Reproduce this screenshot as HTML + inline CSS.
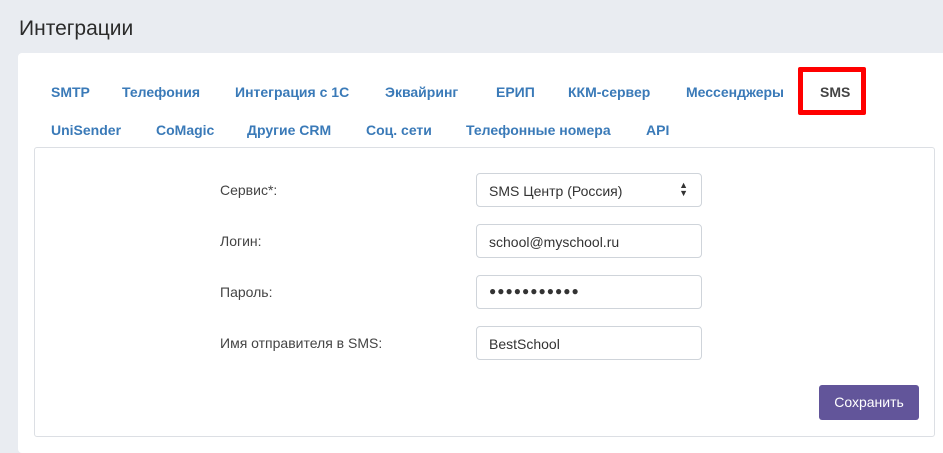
<!DOCTYPE html>
<html><head><meta charset="utf-8"><style>
*{box-sizing:border-box;margin:0;padding:0}
body{width:943px;height:441px;background:#e9ecf1;font-family:"Liberation Sans","DejaVu Sans",sans-serif;position:relative;overflow:hidden}
.h{position:absolute;left:19px;top:17px;font-size:21px;color:#2b2b2b}
.card{position:absolute;left:18px;top:53px;width:940px;height:400px;background:#fff;border-radius:4px}
.t{position:absolute;font-size:14px;font-weight:bold;color:#3a7ab8;white-space:nowrap}
.red{position:absolute;left:798px;top:67px;width:68px;height:48px;border:5px solid #f00;border-radius:2px}
.panel{position:absolute;left:34px;top:147px;width:901px;height:290px;border:1px solid #dcdfe4;border-radius:3px;background:#fff}
.l{position:absolute;left:220px;font-size:14px;color:#444}
.in{position:absolute;left:476px;width:226px;height:34px;border:1px solid #cfd4da;border-radius:4px;font-size:14px;color:#333;padding:9px 12px;background:#fff}
.btn{position:absolute;left:819px;top:385px;width:100px;height:35px;background:#62559a;color:#fff;border-radius:3px;font-size:14px;text-align:center;line-height:35px}
</style></head><body>
<div class="h">Интеграции</div>
<div class="card"></div>
<div class="t" style="left:51px;top:84px">SMTP</div>
<div class="t" style="left:122px;top:84px">Телефония</div>
<div class="t" style="left:235px;top:84px">Интеграция с 1С</div>
<div class="t" style="left:385px;top:84px">Эквайринг</div>
<div class="t" style="left:496px;top:84px">ЕРИП</div>
<div class="t" style="left:568px;top:84px">ККМ-сервер</div>
<div class="t" style="left:686px;top:84px">Мессенджеры</div>
<div class="t" style="left:820px;top:84px;color:#444">SMS</div>
<div class="red"></div>
<div class="t" style="left:51px;top:122px">UniSender</div>
<div class="t" style="left:156px;top:122px">CoMagic</div>
<div class="t" style="left:247px;top:122px">Другие CRM</div>
<div class="t" style="left:366px;top:122px">Соц. сети</div>
<div class="t" style="left:466px;top:122px">Телефонные номера</div>
<div class="t" style="left:646px;top:122px">API</div>
<div class="panel"></div>
<div class="l" style="top:182px">Сервис*:</div>
<div class="l" style="top:233px">Логин:</div>
<div class="l" style="top:284px">Пароль:</div>
<div class="l" style="top:335px">Имя отправителя в SMS:</div>
<div class="in" style="top:173px">SMS Центр (Россия)<span style="position:absolute;right:13px;top:7px;font-size:9px;line-height:8px">▲<br>▼</span></div>
<div class="in" style="top:224px">school@myschool.ru</div>
<div class="in" style="top:275px;font-size:12px;letter-spacing:1px;padding-top:8px">●●●●●●●●●●●</div>
<div class="in" style="top:326px">BestSchool</div>
<div class="btn">Сохранить</div>
</body></html>
